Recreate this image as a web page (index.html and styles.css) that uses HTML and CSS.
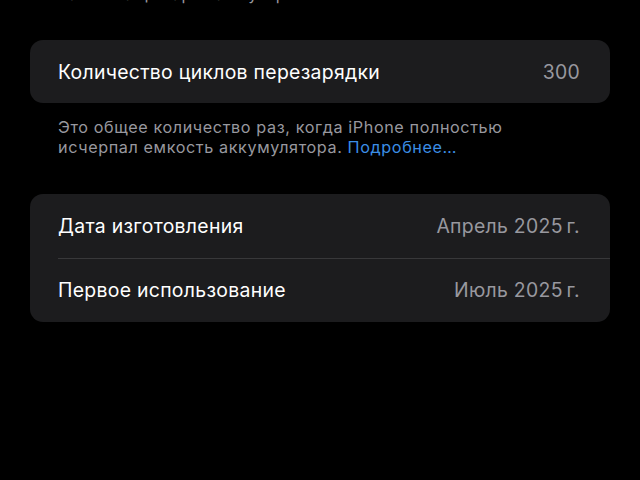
FILE: index.html
```html
<!DOCTYPE html>
<html lang="ru">
<head>
<meta charset="utf-8">
<link rel="stylesheet" href="styles.css">
</head>
<body>
<div class="page">
  <p class="note top-note">Затем чаще заряжать устройство.</p>
  <div class="card">
    <div class="row">
      <span class="label">Количество циклов перезарядки</span>
      <span class="value">300</span>
    </div>
  </div>
  <p class="note footer">Это общее количество раз, когда iPhone полностью<br>исчерпал емкость аккумулятора. <a class="link" href="#">Подробнее…</a></p>
  <div class="card card-2">
    <div class="row">
      <span class="label">Дата изготовления</span>
      <span class="value">Апрель 2025&#8201;г.</span>
    </div>
    <div class="sep"></div>
    <div class="row">
      <span class="label">Первое использование</span>
      <span class="value">Июль 2025&#8201;г.</span>
    </div>
  </div>
</div>
</body>
</html>
```
FILE: styles.css
```css
html, body {
  margin: 0;
  background: #000;
  height: 100%;
}
body {
  font-family: Inter, Roboto, "Noto Sans", sans-serif;
  overflow: hidden;
}
.page {
  padding: 0 30px;
}
.note {
  margin: 0;
  padding: 0 28px;
  font-size: 16.2px;
  letter-spacing: 0.6px;
  line-height: 20px;
  color: #98989f;
}
.top-note {
  margin-top: -16px;
  height: 20px;
}
.card {
  margin-top: 36px;
  background: #1c1c1e;
  border-radius: 13px;
  overflow: hidden;
}
.row {
  height: 63px;
  display: flex;
  align-items: center;
  justify-content: space-between;
  padding: 0 30px 0 28px;
  font-size: 19.4px;
  letter-spacing: 0.3px;
}
.card-2 .row {
  height: 63.5px;
}
.label {
  color: #fff;
}
.value {
  color: #98989f;
}
.sep {
  height: 1px;
  background: #38383a;
  margin-left: 28px;
}
.footer {
  padding-top: 14px;
}
.link {
  color: #3b8ee6;
  text-decoration: none;
}
.card-2 {
  margin-top: 37px;
}
```
